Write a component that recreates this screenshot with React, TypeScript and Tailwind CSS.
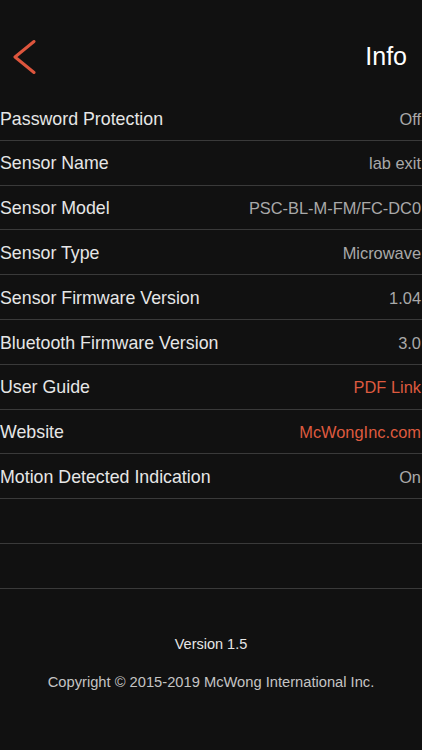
const filas: { label: string; value: string; link?: boolean }[] = [
  { label: 'Password Protection', value: 'Off' },
  { label: 'Sensor Name', value: 'lab exit' },
  { label: 'Sensor Model', value: 'PSC-BL-M-FM/FC-DC0' },
  { label: 'Sensor Type', value: 'Microwave' },
  { label: 'Sensor Firmware Version', value: '1.04' },
  { label: 'Bluetooth Firmware Version', value: '3.0' },
  { label: 'User Guide', value: 'PDF Link', link: true },
  { label: 'Website', value: 'McWongInc.com', link: true },
  { label: 'Motion Detected Indication', value: 'On' },
  { label: '', value: '' },
  { label: '', value: '' },
];

const App = () => {
  return (
    <div
      className="w-[422px] h-[750px] bg-[#111111] flex flex-col"
      style={{ fontFamily: '"Liberation Sans", Arial, sans-serif' }}
    >
      {/* HEADER */}
      <div className="h-[96px] flex items-center justify-between pl-[12px] pr-[15px] pt-[18px]">
        <svg width="24" height="34" viewBox="0 0 24 34" fill="none">
          <polyline
            points="22,1.5 3,17 22,32.5"
            stroke="#dd553d"
            strokeWidth="3"
            strokeLinecap="round"
            strokeLinejoin="round"
          />
        </svg>
        <h1 className="text-[25px] text-white">Info</h1>
      </div>

      {/* LISTA */}
      <div className="flex flex-col">
        {filas.map((f, i) => (
          <div
            key={i}
            className="h-[44.8px] flex items-center justify-between border-b-[1.5px] border-[#3a3a3a] pr-px pt-[2px]"
          >
            <span className="text-[17.8px] text-[#e6e6e6]">{f.label}</span>
            <span className={`text-[16.4px] ${f.link ? 'text-[#de5a3f]' : 'text-[#a9a9a9]'}`}>{f.value}</span>
          </div>
        ))}
      </div>

      {/* PIE */}
      <div className="flex flex-col items-center mt-[45px]">
        <p className="text-[14.5px] text-[#e6e6e6]">Version 1.5</p>
        <p className="text-[14.7px] text-[#c4c4c4] mt-[15px]">Copyright © 2015-2019 McWong International Inc.</p>
      </div>
    </div>
  );
};

export default App;
